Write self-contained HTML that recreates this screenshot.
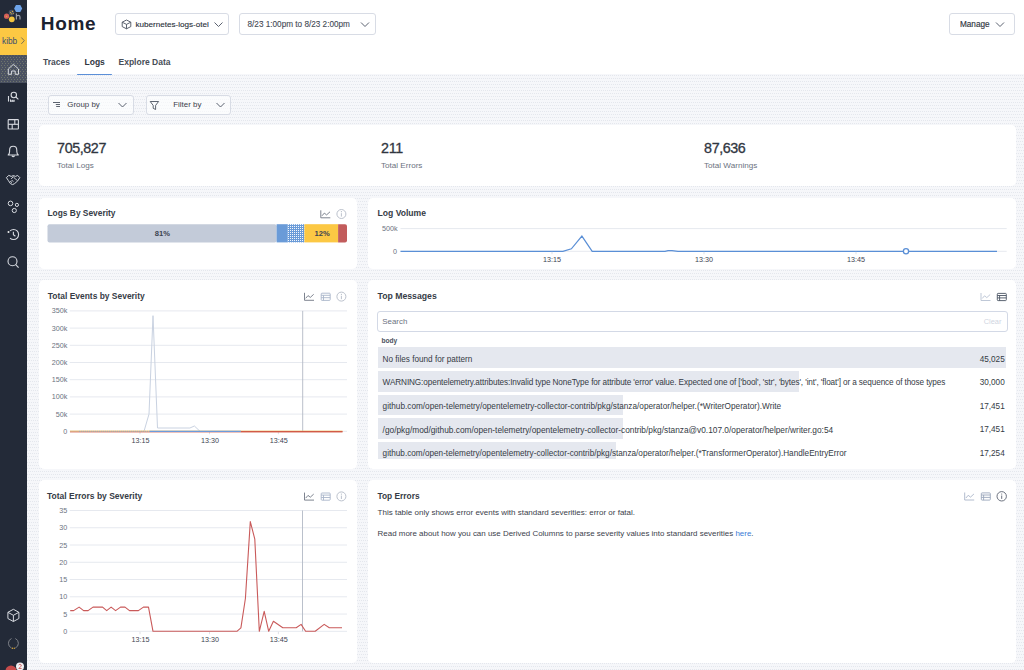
<!DOCTYPE html>
<html><head><meta charset="utf-8">
<style>
*{box-sizing:border-box;margin:0;padding:0}
html,body{width:1024px;height:670px;overflow:hidden;background:#f6f7fa;font-family:"Liberation Sans",sans-serif;color:#2b313b}
.abs{position:absolute}
.t{position:absolute;line-height:1;white-space:nowrap;z-index:2}
#side{position:absolute;left:0;top:0;width:27px;height:670px;background:#232a38}
#hdr{position:absolute;left:27px;top:0;width:997px;height:74.2px;background:#fff}
.card{position:absolute;background:#fff;border-radius:5px}
.btn{position:absolute;background:#fff;border:1px solid #d8dce5;border-radius:3px}
.inp{position:absolute;background:#fff;border:1px solid #d3d9e6;border-radius:3px}
.hl{position:absolute;background:#e5e8ef}
svg{position:absolute;left:0;top:0;z-index:1}
</style></head><body>
<svg width="1024" height="670" style="z-index:0"><defs><pattern id="dots" width="2" height="6" patternUnits="userSpaceOnUse"><rect x="1" y="0" width="1" height="1" fill="#e4e7ed"/><rect x="0" y="3" width="1" height="1" fill="#e4e7ed"/></pattern></defs><rect width="1024" height="670" fill="url(#dots)"/></svg>
<div id="hdr"></div>
<div class="abs" style="left:77.3px;top:73.6px;width:34.7px;height:1.5px;background:#5b8fd8;border-radius:1px"></div>
<div class="t" style="left:40.80px;top:14.12px;font-size:19px;color:#1c2330;font-weight:bold;letter-spacing:0.7px;">Home</div>
<div class="btn" style="left:115px;top:13px;width:114px;height:22px"></div>
<div class="t" style="left:135.50px;top:21.14px;font-size:8.1px;color:#2a303a;-webkit-text-stroke:0.12px #2a303a;">kubernetes-logs-otel</div>
<div class="btn" style="left:238.5px;top:13px;width:137.5px;height:22px"></div>
<div class="t" style="left:247.50px;top:21.16px;font-size:8.2px;color:#434953;-webkit-text-stroke:0.1px #434953;">8/23 1:00pm to 8/23 2:00pm</div>
<div class="btn" style="left:949px;top:13px;width:65.5px;height:22px"></div>
<div class="t" style="left:960.00px;top:21.16px;font-size:8.2px;color:#2f3540;-webkit-text-stroke:0.15px #2f3540;">Manage</div>
<div class="t" style="left:43.00px;top:57.90px;font-size:8.5px;color:#474d57;font-weight:bold;">Traces</div>
<div class="t" style="left:84.50px;top:57.90px;font-size:8.5px;color:#2f3540;font-weight:bold;">Logs</div>
<div class="t" style="left:118.50px;top:57.90px;font-size:8.5px;color:#474d57;font-weight:bold;">Explore Data</div>
<div class="btn" style="left:47.5px;top:95px;width:86px;height:20px;background:rgba(255,255,255,0.6)"></div>
<div class="t" style="left:67.30px;top:100.61px;font-size:7.9px;color:#3b414b;">Group by</div>
<div class="btn" style="left:145.5px;top:95px;width:85.5px;height:20px;background:rgba(255,255,255,0.6)"></div>
<div class="t" style="left:173.30px;top:100.61px;font-size:7.9px;color:#3b414b;">Filter by</div>
<div class="card" style="left:39px;top:125px;width:977px;height:61px"></div>
<div class="t" style="left:57.10px;top:141.30px;font-size:14.3px;color:#30363f;letter-spacing:-0.4px;-webkit-text-stroke:0.3px #30363f;">705,827</div>
<div class="t" style="left:57.00px;top:162.44px;font-size:8.1px;color:#6b7280;">Total Logs</div>
<div class="t" style="left:381.10px;top:141.30px;font-size:14.3px;color:#30363f;letter-spacing:-0.4px;-webkit-text-stroke:0.3px #30363f;">211</div>
<div class="t" style="left:381.00px;top:162.44px;font-size:8.1px;color:#6b7280;">Total Errors</div>
<div class="t" style="left:704.10px;top:141.30px;font-size:14.3px;color:#30363f;letter-spacing:-0.4px;-webkit-text-stroke:0.3px #30363f;">87,636</div>
<div class="t" style="left:704.00px;top:162.44px;font-size:8.1px;color:#6b7280;">Total Warnings</div>
<div class="card" style="left:39px;top:198px;width:318px;height:71px"></div>
<div class="card" style="left:368px;top:198px;width:648px;height:71px"></div>
<div class="card" style="left:39px;top:280px;width:318px;height:189px"></div>
<div class="card" style="left:368px;top:280px;width:648px;height:189px"></div>
<div class="card" style="left:39px;top:480px;width:318px;height:183px"></div>
<div class="card" style="left:368px;top:480px;width:648px;height:183px"></div>
<div class="t" style="left:47.50px;top:209.29px;font-size:8.4px;color:#363c46;font-weight:bold;">Logs By Severity</div>
<div class="t" style="left:377.50px;top:209.32px;font-size:8.6px;color:#363c46;font-weight:bold;">Log Volume</div>
<div class="t" style="left:47.80px;top:291.95px;font-size:8.45px;color:#363c46;font-weight:bold;">Total Events by Severity</div>
<div class="t" style="left:377.50px;top:292.04px;font-size:8.7px;color:#363c46;font-weight:bold;">Top Messages</div>
<div class="t" style="left:47.00px;top:491.80px;font-size:8.5px;color:#363c46;font-weight:bold;">Total Errors by Severity</div>
<div class="t" style="left:377.50px;top:491.83px;font-size:8.35px;color:#363c46;font-weight:bold;">Top Errors</div>
<div class="t" style="left:154.80px;top:229.87px;font-size:7.6px;color:#3d4451;font-weight:bold;">81%</div>
<div class="t" style="left:314.60px;top:229.87px;font-size:7.6px;color:#3d4451;font-weight:bold;">12%</div>
<div class="t" style="left:382.00px;top:225.21px;font-size:7.2px;color:#6b7280;">500k</div>
<div class="t" style="left:393.00px;top:247.91px;font-size:7.2px;color:#6b7280;">0</div>
<div class="t" style="left:543.10px;top:255.91px;font-size:7.2px;color:#3d4451;width:16.6px;text-align:center;">13:15</div>
<div class="t" style="left:695.10px;top:255.91px;font-size:7.2px;color:#3d4451;width:16.6px;text-align:center;">13:30</div>
<div class="t" style="left:847.10px;top:255.91px;font-size:7.2px;color:#3d4451;width:16.6px;text-align:center;">13:45</div>
<div class="t" style="left:30.00px;top:307.41px;font-size:7.2px;color:#6b7280;width:37.3px;text-align:right;">350k</div>
<div class="t" style="left:30.00px;top:324.61px;font-size:7.2px;color:#6b7280;width:37.3px;text-align:right;">300k</div>
<div class="t" style="left:30.00px;top:341.81px;font-size:7.2px;color:#6b7280;width:37.3px;text-align:right;">250k</div>
<div class="t" style="left:30.00px;top:359.01px;font-size:7.2px;color:#6b7280;width:37.3px;text-align:right;">200k</div>
<div class="t" style="left:30.00px;top:376.21px;font-size:7.2px;color:#6b7280;width:37.3px;text-align:right;">150k</div>
<div class="t" style="left:30.00px;top:393.41px;font-size:7.2px;color:#6b7280;width:37.3px;text-align:right;">100k</div>
<div class="t" style="left:30.00px;top:410.61px;font-size:7.2px;color:#6b7280;width:37.3px;text-align:right;">50k</div>
<div class="t" style="left:30.00px;top:427.81px;font-size:7.2px;color:#6b7280;width:37.3px;text-align:right;">0</div>
<div class="t" style="left:131.40px;top:436.91px;font-size:7.2px;color:#3d4451;width:16.6px;text-align:center;">13:15</div>
<div class="t" style="left:200.90px;top:436.91px;font-size:7.2px;color:#3d4451;width:16.6px;text-align:center;">13:30</div>
<div class="t" style="left:269.80px;top:436.91px;font-size:7.2px;color:#3d4451;width:16.6px;text-align:center;">13:45</div>
<div class="t" style="left:30.00px;top:507.01px;font-size:7.2px;color:#6b7280;width:37.3px;text-align:right;">35</div>
<div class="t" style="left:30.00px;top:524.27px;font-size:7.2px;color:#6b7280;width:37.3px;text-align:right;">30</div>
<div class="t" style="left:30.00px;top:541.53px;font-size:7.2px;color:#6b7280;width:37.3px;text-align:right;">25</div>
<div class="t" style="left:30.00px;top:558.79px;font-size:7.2px;color:#6b7280;width:37.3px;text-align:right;">20</div>
<div class="t" style="left:30.00px;top:576.05px;font-size:7.2px;color:#6b7280;width:37.3px;text-align:right;">15</div>
<div class="t" style="left:30.00px;top:593.31px;font-size:7.2px;color:#6b7280;width:37.3px;text-align:right;">10</div>
<div class="t" style="left:30.00px;top:610.57px;font-size:7.2px;color:#6b7280;width:37.3px;text-align:right;">5</div>
<div class="t" style="left:30.00px;top:627.83px;font-size:7.2px;color:#6b7280;width:37.3px;text-align:right;">0</div>
<div class="t" style="left:131.40px;top:636.41px;font-size:7.2px;color:#3d4451;width:16.6px;text-align:center;">13:15</div>
<div class="t" style="left:200.90px;top:636.41px;font-size:7.2px;color:#3d4451;width:16.6px;text-align:center;">13:30</div>
<div class="t" style="left:269.80px;top:636.41px;font-size:7.2px;color:#3d4451;width:16.6px;text-align:center;">13:45</div>
<div class="inp" style="left:377px;top:311.3px;width:630.5px;height:20.9px"></div>
<div class="t" style="left:382.30px;top:317.61px;font-size:7.9px;color:#6b7280;">Search</div>
<div class="t" style="left:983.70px;top:318.04px;font-size:7.4px;color:#cfd5df;">Clear</div>
<div class="t" style="left:381.50px;top:338.21px;font-size:6.6px;color:#4b5260;font-weight:bold;">body</div>
<div class="hl" style="left:377.8px;top:347.4px;width:628.6px;height:20.6px"></div>
<div class="t" style="left:382.60px;top:355.56px;font-size:8.2px;color:#353b45;white-space:nowrap;">No files found for pattern</div>
<div class="t" style="left:960.00px;top:355.56px;font-size:8.2px;color:#353b45;width:44.7px;text-align:right;">45,025</div>
<div class="hl" style="left:377.8px;top:371.0px;width:421.5px;height:20.6px"></div>
<div class="t" style="left:382.60px;top:379.16px;font-size:8.2px;color:#353b45;letter-spacing:-0.105px;white-space:nowrap;">WARNING:opentelemetry.attributes:Invalid type NoneType for attribute &#x27;error&#x27; value. Expected one of [&#x27;bool&#x27;, &#x27;str&#x27;, &#x27;bytes&#x27;, &#x27;int&#x27;, &#x27;float&#x27;] or a sequence of those types</div>
<div class="t" style="left:960.00px;top:379.16px;font-size:8.2px;color:#353b45;width:44.7px;text-align:right;">30,000</div>
<div class="hl" style="left:377.8px;top:394.6px;width:245.3px;height:20.6px"></div>
<div class="t" style="left:382.60px;top:402.73px;font-size:8.23px;color:#353b45;white-space:nowrap;">github.com/open-telemetry/opentelemetry-collector-contrib/pkg/stanza/operator/helper.(*WriterOperator).Write</div>
<div class="t" style="left:960.00px;top:402.76px;font-size:8.2px;color:#353b45;width:44.7px;text-align:right;">17,451</div>
<div class="hl" style="left:377.8px;top:418.0px;width:245.3px;height:20.6px"></div>
<div class="t" style="left:382.60px;top:426.05px;font-size:8.33px;color:#353b45;white-space:nowrap;">/go/pkg/mod/github.com/open-telemetry/opentelemetry-collector-contrib/pkg/stanza@v0.107.0/operator/helper/writer.go:54</div>
<div class="t" style="left:960.00px;top:426.16px;font-size:8.2px;color:#353b45;width:44.7px;text-align:right;">17,451</div>
<div class="hl" style="left:377.8px;top:441.6px;width:238.7px;height:17.8px"></div>
<div class="t" style="left:382.60px;top:449.76px;font-size:8.2px;color:#353b45;white-space:nowrap;">github.com/open-telemetry/opentelemetry-collector-contrib/pkg/stanza/operator/helper.(*TransformerOperator).HandleEntryError</div>
<div class="t" style="left:960.00px;top:449.76px;font-size:8.2px;color:#353b45;width:44.7px;text-align:right;">17,254</div>
<div class="t" style="left:377.60px;top:508.83px;font-size:8.0px;color:#3b414b;">This table only shows error events with standard severities: error or fatal.</div>
<div class="t" style="left:377.60px;top:530.07px;font-size:7.95px;color:#3b414b;">Read more about how you can use Derived Columns to parse severity values into standard severities <span style="color:#3a7bd6">here</span>.</div>

<div id="side"><div class="abs" style="left:0;top:27.6px;width:27px;height:27.4px;background:#fcc843"></div><div class="abs" style="left:0;top:55px;width:27px;height:28px;background:#4a505c"></div></div>
<div class="t" style="left:2.00px;top:36.77px;font-size:8.3px;color:#3a4d72;">kibb</div>

<svg width="1024" height="670" viewBox="0 0 1024 670"><polyline points="214.5,22.5 218.5,26.5 222.5,22.5" fill="none" stroke="#5b6270" stroke-width="1"/><polyline points="361,22.5 365.0,26.5 369,22.5" fill="none" stroke="#5b6270" stroke-width="1"/><polyline points="996,22.5 1000.0,26.5 1004,22.5" fill="none" stroke="#5b6270" stroke-width="1"/><g fill="none" stroke="#4b5260" stroke-width="0.9" stroke-linejoin="round"><path d="M126.5,20 L130.8,22.2 L130.8,26.6 L126.5,28.8 L122.2,26.6 L122.2,22.2 Z"/><path d="M122.2,22.2 L126.5,24.4 L130.8,22.2 M126.5,24.4 L126.5,28.8"/></g><g stroke="#4b5260" stroke-width="0.9"><line x1="53" y1="102.5" x2="60" y2="102.5"/><line x1="55.8" y1="104.5" x2="60" y2="104.5"/><line x1="56.2" y1="106.5" x2="60" y2="106.5"/></g><polyline points="118.5,103 122.5,107 126.5,103" fill="none" stroke="#5b6270" stroke-width="1"/><polyline points="216.5,103 220.5,107 224.5,103" fill="none" stroke="#5b6270" stroke-width="1"/><path d="M150.2,101.5 L158.6,101.5 L155.6,105.4 L155.6,109.5 L153.2,108.3 L153.2,105.4 Z" fill="none" stroke="#4b5260" stroke-width="0.9" stroke-linejoin="round"/><g fill="none" stroke="#6f7683" stroke-width="0.9"><polyline points="320.8,210.3 320.8,217.8 330.3,217.8"/><polyline points="322.0,215.8 324.3,213.10000000000002 326.6,214.9 330.0,211.8"/></g><g fill="none" stroke="#b3bac6" stroke-width="0.9"><circle cx="341.4" cy="214" r="4.5"/><line x1="341.4" y1="213.2" x2="341.4" y2="216.6"/></g><circle cx="341.4" cy="211.7" r="0.6" fill="#b3bac6"/><g fill="none" stroke="#6f7683" stroke-width="0.9"><polyline points="304.5,292.8 304.5,300.3 314.0,300.3"/><polyline points="305.7,298.3 308.0,295.6 310.3,297.40000000000003 313.7,294.3"/></g><g fill="none" stroke="#a9b5c9" stroke-width="0.9"><rect x="321.2" y="293.2" width="9" height="7.2" rx="0.8"/><line x1="321.2" y1="295.3" x2="330.2" y2="295.3"/><line x1="321.2" y1="297.7" x2="330.2" y2="297.7"/><line x1="323.5" y1="295.3" x2="323.5" y2="300.40000000000003"/></g><g fill="none" stroke="#b3bac6" stroke-width="0.9"><circle cx="341.4" cy="296.6" r="4.5"/><line x1="341.4" y1="295.8" x2="341.4" y2="299.20000000000005"/></g><circle cx="341.4" cy="294.3" r="0.6" fill="#b3bac6"/><g fill="none" stroke="#6f7683" stroke-width="0.9"><polyline points="304.5,492.6 304.5,500.1 314.0,500.1"/><polyline points="305.7,498.1 308.0,495.40000000000003 310.3,497.20000000000005 313.7,494.1"/></g><g fill="none" stroke="#a9b5c9" stroke-width="0.9"><rect x="321.2" y="493.0" width="9" height="7.2" rx="0.8"/><line x1="321.2" y1="495.1" x2="330.2" y2="495.1"/><line x1="321.2" y1="497.5" x2="330.2" y2="497.5"/><line x1="323.5" y1="495.1" x2="323.5" y2="500.20000000000005"/></g><g fill="none" stroke="#b3bac6" stroke-width="0.9"><circle cx="341.4" cy="496.4" r="4.5"/><line x1="341.4" y1="495.59999999999997" x2="341.4" y2="499.0"/></g><circle cx="341.4" cy="494.09999999999997" r="0.6" fill="#b3bac6"/><g fill="none" stroke="#b8c2d3" stroke-width="0.9"><polyline points="981,293 981,300.5 990.5,300.5"/><polyline points="982.2,298.5 984.5,295.8 986.8,297.6 990.2,294.5"/></g><g fill="none" stroke="#4b5563" stroke-width="0.9"><rect x="997.3" y="293.4" width="9" height="7.2" rx="0.8"/><line x1="997.3" y1="295.5" x2="1006.3" y2="295.5"/><line x1="997.3" y1="297.9" x2="1006.3" y2="297.9"/><line x1="999.5999999999999" y1="295.5" x2="999.5999999999999" y2="300.6"/></g><g fill="none" stroke="#a9b4c8" stroke-width="0.9"><polyline points="964.7,492.5 964.7,500.0 974.2,500.0"/><polyline points="965.9000000000001,498.0 968.2,495.3 970.5,497.1 973.9000000000001,494.0"/></g><g fill="none" stroke="#9aa6bb" stroke-width="0.9"><rect x="981.3" y="492.9" width="9" height="7.2" rx="0.8"/><line x1="981.3" y1="495.0" x2="990.3" y2="495.0"/><line x1="981.3" y1="497.4" x2="990.3" y2="497.4"/><line x1="983.5999999999999" y1="495.0" x2="983.5999999999999" y2="500.1"/></g><g fill="none" stroke="#5b6270" stroke-width="0.9"><circle cx="1001.7" cy="496.3" r="4.7"/><line x1="1001.7" y1="495.5" x2="1001.7" y2="498.90000000000003"/></g><circle cx="1001.7" cy="494.0" r="0.6" fill="#5b6270"/><rect x="47.5" y="224.2" width="229.1" height="18.2" rx="2" fill="#c3cbd9"/><rect x="276.6" y="224.2" width="10.7" height="18.2" fill="#6a9bd8"/><defs><pattern id="bdots" width="2" height="2" patternUnits="userSpaceOnUse"><rect width="2" height="2" fill="#6a9bd8"/><rect x="0" y="0" width="1" height="1" fill="#f4f7fc"/></pattern></defs><rect x="287.3" y="224.2" width="17.1" height="18.2" fill="url(#bdots)"/><rect x="304.4" y="224.2" width="33.7" height="18.2" fill="#fcc844"/><path d="M338.1,224.2 H345 a2,2 0 0 1 2,2 V240.4 a2,2 0 0 1 -2,2 H338.1 Z" fill="#c25c5c"/><line x1="400.5" y1="228.6" x2="1006.7" y2="228.6" stroke="#e6e9ef" stroke-width="1"/><line x1="400.5" y1="251.3" x2="1006.7" y2="251.3" stroke="#e6e9ef" stroke-width="1"/><polyline points="400.5,251.3 562.9,251.3 571.4,248.8 581.9,236.1 592.2,251.3 665,251.3 668,250.6 672,250.6 678,251.3 997,251.3" fill="none" stroke="#5a8fd6" stroke-width="1.2"/><circle cx="906" cy="251.3" r="2.6" fill="#fff" stroke="#5a8fd6" stroke-width="1.3"/><line x1="552" y1="251.8" x2="552" y2="254.2" stroke="#d5d9e0" stroke-width="0.8"/><line x1="704" y1="251.8" x2="704" y2="254.2" stroke="#d5d9e0" stroke-width="0.8"/><line x1="856" y1="251.8" x2="856" y2="254.2" stroke="#d5d9e0" stroke-width="0.8"/><line x1="69.7" y1="310.90" x2="347" y2="310.90" stroke="#e6e9ef" stroke-width="1"/><line x1="69.7" y1="328.10" x2="347" y2="328.10" stroke="#e6e9ef" stroke-width="1"/><line x1="69.7" y1="345.30" x2="347" y2="345.30" stroke="#e6e9ef" stroke-width="1"/><line x1="69.7" y1="362.50" x2="347" y2="362.50" stroke="#e6e9ef" stroke-width="1"/><line x1="69.7" y1="379.70" x2="347" y2="379.70" stroke="#e6e9ef" stroke-width="1"/><line x1="69.7" y1="396.90" x2="347" y2="396.90" stroke="#e6e9ef" stroke-width="1"/><line x1="69.7" y1="414.10" x2="347" y2="414.10" stroke="#e6e9ef" stroke-width="1"/><line x1="69.7" y1="431.30" x2="347" y2="431.30" stroke="#e6e9ef" stroke-width="1"/><line x1="140" y1="431.8" x2="140" y2="434.2" stroke="#d5d9e0" stroke-width="0.8"/><line x1="209.5" y1="431.8" x2="209.5" y2="434.2" stroke="#d5d9e0" stroke-width="0.8"/><line x1="278.4" y1="431.8" x2="278.4" y2="434.2" stroke="#d5d9e0" stroke-width="0.8"/><line x1="302.7" y1="310.9" x2="302.7" y2="431.3" stroke="#b2b9c5" stroke-width="0.9"/><polyline points="70,431.3 144,431.3 149,414.1 153,315.7 157.5,428 189.9,428 194.4,426 200,431.3" fill="none" stroke="#c9d2e1" stroke-width="1"/><line x1="70" y1="431.9" x2="342.5" y2="431.9" stroke="#d0533f" stroke-width="0.9"/><line x1="70" y1="431.0" x2="342.5" y2="431.0" stroke="#f0c870" stroke-width="0.8"/><line x1="79" y1="431.4" x2="149.6" y2="431.4" stroke="#9aa6b8" stroke-width="0.9" stroke-dasharray="1 1"/><line x1="149.6" y1="431.4" x2="240.9" y2="431.4" stroke="#6c9bdc" stroke-width="1.1"/><line x1="240.9" y1="431.6" x2="342.5" y2="431.6" stroke="#d0533f" stroke-width="1"/><line x1="69.7" y1="510.50" x2="347" y2="510.50" stroke="#e6e9ef" stroke-width="1"/><line x1="69.7" y1="527.76" x2="347" y2="527.76" stroke="#e6e9ef" stroke-width="1"/><line x1="69.7" y1="545.02" x2="347" y2="545.02" stroke="#e6e9ef" stroke-width="1"/><line x1="69.7" y1="562.28" x2="347" y2="562.28" stroke="#e6e9ef" stroke-width="1"/><line x1="69.7" y1="579.54" x2="347" y2="579.54" stroke="#e6e9ef" stroke-width="1"/><line x1="69.7" y1="596.80" x2="347" y2="596.80" stroke="#e6e9ef" stroke-width="1"/><line x1="69.7" y1="614.06" x2="347" y2="614.06" stroke="#e6e9ef" stroke-width="1"/><line x1="69.7" y1="631.32" x2="347" y2="631.32" stroke="#e6e9ef" stroke-width="1"/><line x1="140" y1="631.8" x2="140" y2="634.2" stroke="#d5d9e0" stroke-width="0.8"/><line x1="209.5" y1="631.8" x2="209.5" y2="634.2" stroke="#d5d9e0" stroke-width="0.8"/><line x1="278.4" y1="631.8" x2="278.4" y2="634.2" stroke="#d5d9e0" stroke-width="0.8"/><line x1="302.5" y1="510.5" x2="302.5" y2="631.3" stroke="#b2b9c5" stroke-width="0.9"/><polyline points="70.2,610.6 73.6,610.6 79.1,607.1 83.6,610.6 88.1,610.6 93.0,607.1 102.6,607.1 106.7,610.6 111.1,607.1 115.6,610.6 120.5,607.1 125.0,607.1 129.5,610.6 138.4,610.6 143.4,607.1 148.5,607.1 153.0,631.3 236.9,631.3 240.9,627.8 245.4,598.5 250.3,521.6 254.8,539.2 259.3,631.3 264.2,611.3 268.7,631.3 273.4,621.3 282.8,627.8 296.2,627.8 301.1,624.4 305.6,631.3 315.2,631.3 324.2,624.4 329.3,627.8 342.0,627.8" fill="none" stroke="#c95a5a" stroke-width="1.1" stroke-linejoin="round"/><polyline points="21.3,37.5 24.3,40.7 21.3,43.9" fill="none" stroke="#6f6a55" stroke-width="0.9"/><path d="M16,5 L20.3,5 L22.2,8.5 L20.3,12 L16,12 L14.1,8.5 Z" fill="#6ea4ea"/><circle cx="11.5" cy="12.6" r="2.8" fill="#4b5262"/><circle cx="10.5" cy="12.6" r="0.55" fill="#e0b13a"/><circle cx="12.5" cy="11.4" r="0.55" fill="#e0b13a"/><circle cx="11.6" cy="13.8" r="0.55" fill="#e0b13a"/><circle cx="13.3" cy="13.6" r="0.5" fill="#e0b13a"/><circle cx="6.6" cy="16.2" r="2.6" fill="#d6605a"/><circle cx="6.5" cy="16.4" r="0.7" fill="#d9a73a"/><circle cx="11.8" cy="19.3" r="2.9" fill="#f3c53f"/><path d="M16.4,13.4 V19.5 M16.4,16.8 Q16.4,15.4 18.2,15.4 Q20,15.4 20,17.1 V19.5" fill="none" stroke="#9a9ea6" stroke-width="1.2"/><defs><pattern id="hdots" width="3" height="4" patternUnits="userSpaceOnUse" x="0" y="1"><rect width="3" height="4" fill="#4b5262"/><rect x="1" y="0" width="1" height="1" fill="#6f766c"/><rect x="2" y="2" width="1" height="1" fill="#6f766c"/></pattern></defs><rect x="0" y="55.6" width="27" height="27.4" fill="url(#hdots)"/><path d="M8.3,69 L13.4,64.3 L18.5,69 V74.3 H15.2 V71 H11.6 V74.3 H8.3 Z" fill="none" stroke="#d7dae0" stroke-width="1" stroke-linejoin="round"/><g fill="none" stroke="#d7dae0" stroke-width="1.1"><circle cx="13.8" cy="95" r="2.7"/><line x1="15.8" y1="97" x2="18.4" y2="99.3"/><line x1="8.5" y1="96" x2="8.5" y2="101.6"/><line x1="10.5" y1="99.4" x2="10.5" y2="101.6"/><line x1="12.3" y1="99.8" x2="12.3" y2="101.6"/><line x1="14" y1="99.8" x2="14" y2="101.6"/><line x1="10" y1="101.1" x2="14.5" y2="101.1"/></g><g fill="none" stroke="#d7dae0" stroke-width="1.1"><rect x="8.2" y="119.6" width="10.2" height="9.4" rx="0.6"/><line x1="8.2" y1="124.3" x2="18.4" y2="124.3"/><line x1="14.8" y1="119.6" x2="14.8" y2="124.3"/><line x1="12.2" y1="124.3" x2="12.2" y2="129"/></g><g fill="none" stroke="#d7dae0" stroke-width="1.1" stroke-linejoin="round"><path d="M8.2,155 Q9.6,153.6 9.6,151.6 V150.2 Q9.6,146.3 13.2,146.3 Q16.8,146.3 16.8,150.2 V151.6 Q16.8,153.6 18.3,155 Z"/><path d="M11.8,155.6 Q13.2,157.6 14.6,155.6"/></g><g fill="none" stroke="#d7dae0" stroke-width="1" stroke-linejoin="round"><path d="M6.4,177.6 L8.8,175.4 L11.2,176.4 L13.4,175.6 L15.6,176.4 L17.6,175.4 L19.8,177.6 L17.8,180.8 L14.6,183.6 L12.6,184.6 L10.4,183.6 L8.4,180.6 Z"/><path d="M11.2,178.8 L13.4,176.8 L14.8,178.2 L17.2,180.6 M10.2,181.2 L12,182.6 M11.6,180 L13.2,181.6"/></g><g fill="none" stroke="#d7dae0" stroke-width="1"><circle cx="10.5" cy="203.4" r="2.3"/><circle cx="16.9" cy="204.9" r="1.6"/><circle cx="14.3" cy="210.5" r="2.1"/></g><g fill="none" stroke="#d7dae0" stroke-width="1.1"><path d="M10.06,230.96 A5,5 0 1 1 10.06,238.04"/><polyline points="13.4,231.8 13.4,234.8 15.4,236.3"/></g><circle cx="8.5" cy="232.1" r="1" fill="#f0f0f0"/><g fill="none" stroke="#d7dae0" stroke-width="1.1"><circle cx="12.5" cy="261.3" r="4.5"/><line x1="15.7" y1="264.6" x2="18.6" y2="267.6"/></g><g fill="none" stroke="#d7dae0" stroke-width="1" stroke-linejoin="round"><path d="M13.4,609.3 L18.9,612.3 L18.9,618.5 L13.4,621.5 L7.9,618.5 L7.9,612.3 Z"/><path d="M7.9,612.3 L13.4,615.3 L18.9,612.3 M13.4,615.3 V621.5"/></g><g fill="none" stroke="#7c7f86" stroke-width="1"><path d="M11.5,638.5 A5.2,5.2 0 0 0 11.5,648"/><path d="M15.3,638.5 A5.2,5.2 0 0 1 15.3,648"/></g><circle cx="12.4" cy="648.3" r="0.7" fill="#d9a73a"/><circle cx="14.3" cy="648.3" r="0.7" fill="#d9a73a"/><circle cx="11" cy="671" r="5.5" fill="#c64b4b"/><circle cx="20" cy="666.5" r="4" fill="#f2f2f4"/><path d="M18.6,665 Q20,663.2 21.4,665 Q21.4,666.3 18.8,668.5 H21.6" fill="none" stroke="#c64b4b" stroke-width="0.8"/></svg>
</body></html>
